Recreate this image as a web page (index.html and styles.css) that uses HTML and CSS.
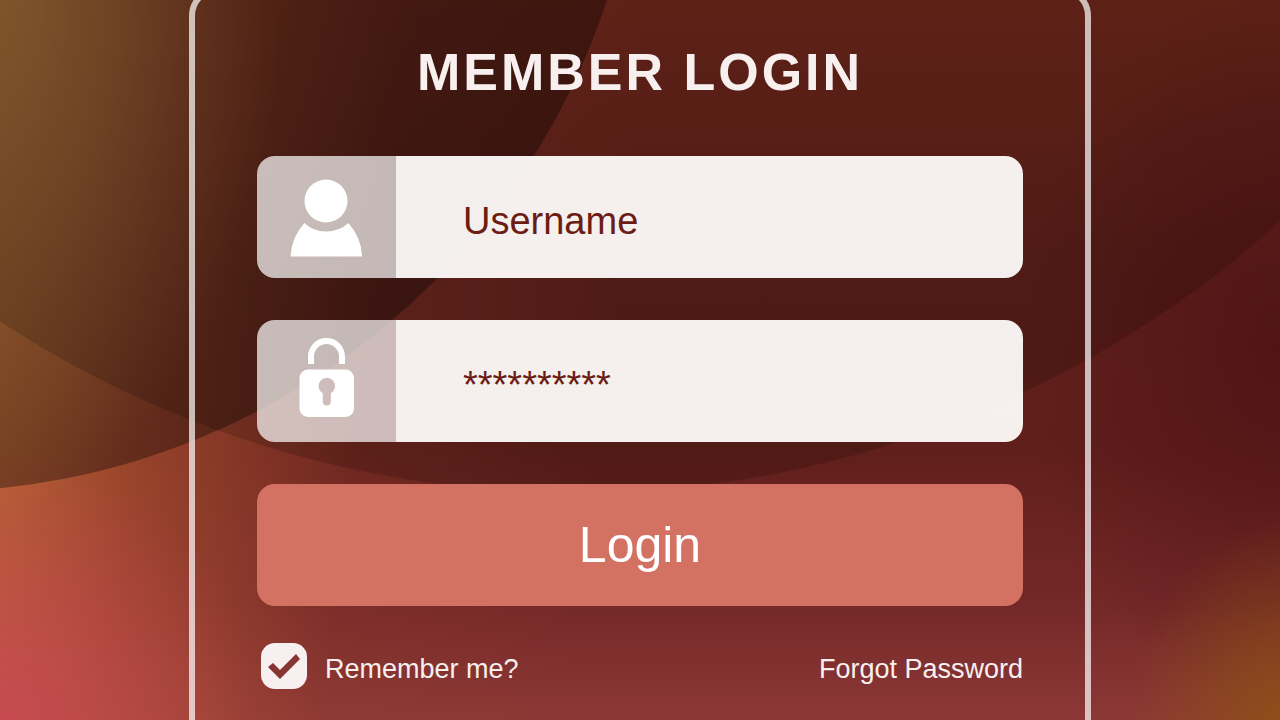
FILE: index.html
```html
<!DOCTYPE html>
<html lang="en">
<head>
<meta charset="utf-8">
<meta name="viewport" content="width=device-width, initial-scale=1">
<title>Member Login</title>
<link rel="stylesheet" href="styles.css">
</head>
<body class="page">
<svg class="backdrop" viewBox="0 0 1280 720" preserveAspectRatio="xMidYMid slice" aria-hidden="true">
  <circle class="shade-wide" cx="575" cy="-557" r="1050"/>
  <circle class="shade-corner" cx="-73" cy="-224" r="716"/>
</svg>
<main class="card">
  <h1 class="title">MEMBER LOGIN</h1>
  <form class="form">
    <div class="field">
      <label class="field-icon" for="username" aria-label="Username">
        <svg class="icon" viewBox="0 0 138 122" aria-hidden="true">
          <circle cx="69" cy="45" r="21.500"/>
          <path d="M47.500 67Q56 75.500 69 75.500T91.500 67Q105 83 105 100.500H33.500Q34.500 81 47.500 67Z"/>
        </svg>
      </label>
      <input class="field-input" id="username" type="text" placeholder="Username">
    </div>
    <div class="field">
      <label class="field-icon" for="password" aria-label="Password">
        <svg class="icon" viewBox="0 0 138 122" aria-hidden="true">
          <path class="shackle" d="M54 44V36.500A15.500 15.500 0 0 1 85 36.500V44"/>
          <path fill-rule="evenodd" d="M51 49.500H88.500A8.500 8.500 0 0 1 97 58V88.500A8.500 8.500 0 0 1 88.500 97H51A8.500 8.500 0 0 1 42.500 88.500V58A8.500 8.500 0 0 1 51 49.500ZM65.800 73.300V81.500A4 4 0 0 0 73.800 81.500V73.300A8.300 8.300 0 1 0 65.800 73.300Z"/>
        </svg>
      </label>
      <input class="field-input" id="password" type="text" value="**********" autocomplete="off">
    </div>
    <button class="submit" type="submit">Login</button>
    <div class="options">
      <label class="remember">
        <input class="check" type="checkbox" checked>
        <span class="option-text">Remember me?</span>
      </label>
      <a class="option-text" href="#">Forgot Password</a>
    </div>
  </form>
</main>
</body>
</html>
```
FILE: styles.css
```css
* { box-sizing: border-box; }

.page {
  display: flow-root;
  margin: 0;
  height: 100vh;
  overflow: hidden;
  position: relative;
  font-family: "Liberation Sans", Arial, sans-serif;
  color: #f8efef;
  background:
    radial-gradient(ellipse 13% 30% at 101% 102%, rgba(142, 80, 22, 1), rgba(142, 80, 22, 0)),
    radial-gradient(ellipse 20% 38% at 0% 100%, rgba(200, 70, 84, 0.85), rgba(200, 70, 84, 0)),
    radial-gradient(ellipse 22% 70% at 0% 0%, rgba(255, 184, 100, 0.6), rgba(255, 184, 100, 0)),
    linear-gradient(97deg, rgba(214, 126, 60, 0.8), rgba(190, 92, 54, 0.58) 14%, rgba(150, 62, 46, 0.26) 30%, rgba(150, 62, 46, 0) 48%),
    radial-gradient(ellipse 20% 50% at 100% 48%, rgba(74, 14, 20, 0.65), rgba(74, 14, 20, 0)),
    linear-gradient(#70281b, #5f211b 38%, #601f1a 62%, #742828 84%, #8c3836);
}

.backdrop {
  position: absolute;
  inset: 0;
  width: 100%;
  height: 100%;
}

.shade-wide { fill: rgba(0, 0, 0, 0.16); }
.shade-corner { fill: rgba(0, 0, 0, 0.34); }

.card {
  position: relative;
  width: 100%;
  max-width: 902px;
  margin: -14px auto 0;
  padding: 50px 62px 100px;
  border: 6px solid rgba(255, 255, 255, 0.7);
  border-radius: 30px;
}

.title {
  margin: 0 0 54px;
  font-size: 52px;
  line-height: 60px;
  font-weight: bold;
  text-align: center;
  letter-spacing: 3px;
}

.form {
  display: flex;
  flex-direction: column;
  gap: 42px;
}

.field {
  display: flex;
  min-height: 122px;
  border-radius: 18px;
  overflow: hidden;
}

.field-icon {
  flex: none;
  width: 139px;
  background: rgba(255, 255, 255, 0.7);
}

.icon {
  display: block;
  width: 138px;
  height: 122px;
  fill: #fff;
}

.shackle {
  fill: none;
  stroke: #fff;
  stroke-width: 6;
}

.field-input {
  flex: 1;
  min-width: 0;
  padding: 8px 24px 0 67px;
  border: 0;
  outline: 0;
  background: rgba(255, 253, 252, 0.94);
  color: #6b1d14;
  font-family: inherit;
  font-size: 38px;
}

.field-input::placeholder {
  color: #6b1d14;
  opacity: 1;
}

.submit {
  min-height: 122px;
  padding: 0 24px;
  border: 0;
  border-radius: 18px;
  background: #d37262;
  color: #fff;
  font-family: inherit;
  font-size: 50px;
}

.options {
  display: flex;
  justify-content: space-between;
  align-items: center;
  margin-top: -5px;
  padding-left: 4px;
}

.remember {
  display: flex;
  align-items: center;
  gap: 18px;
}

.check {
  appearance: none;
  width: 46px;
  height: 46px;
  margin: 0;
  border-radius: 14px;
  background: #f8f0f0;
}

.check:checked::before {
  content: "";
  display: block;
  width: 46px;
  height: 46px;
  background: #863532;
  clip-path: polygon(7px 24px, 12px 20px, 19px 27px, 35px 11px, 39px 16px, 19px 36px);
}

.option-text {
  padding-top: 6px;
  font-size: 27px;
  color: inherit;
  text-decoration: none;
}
```
